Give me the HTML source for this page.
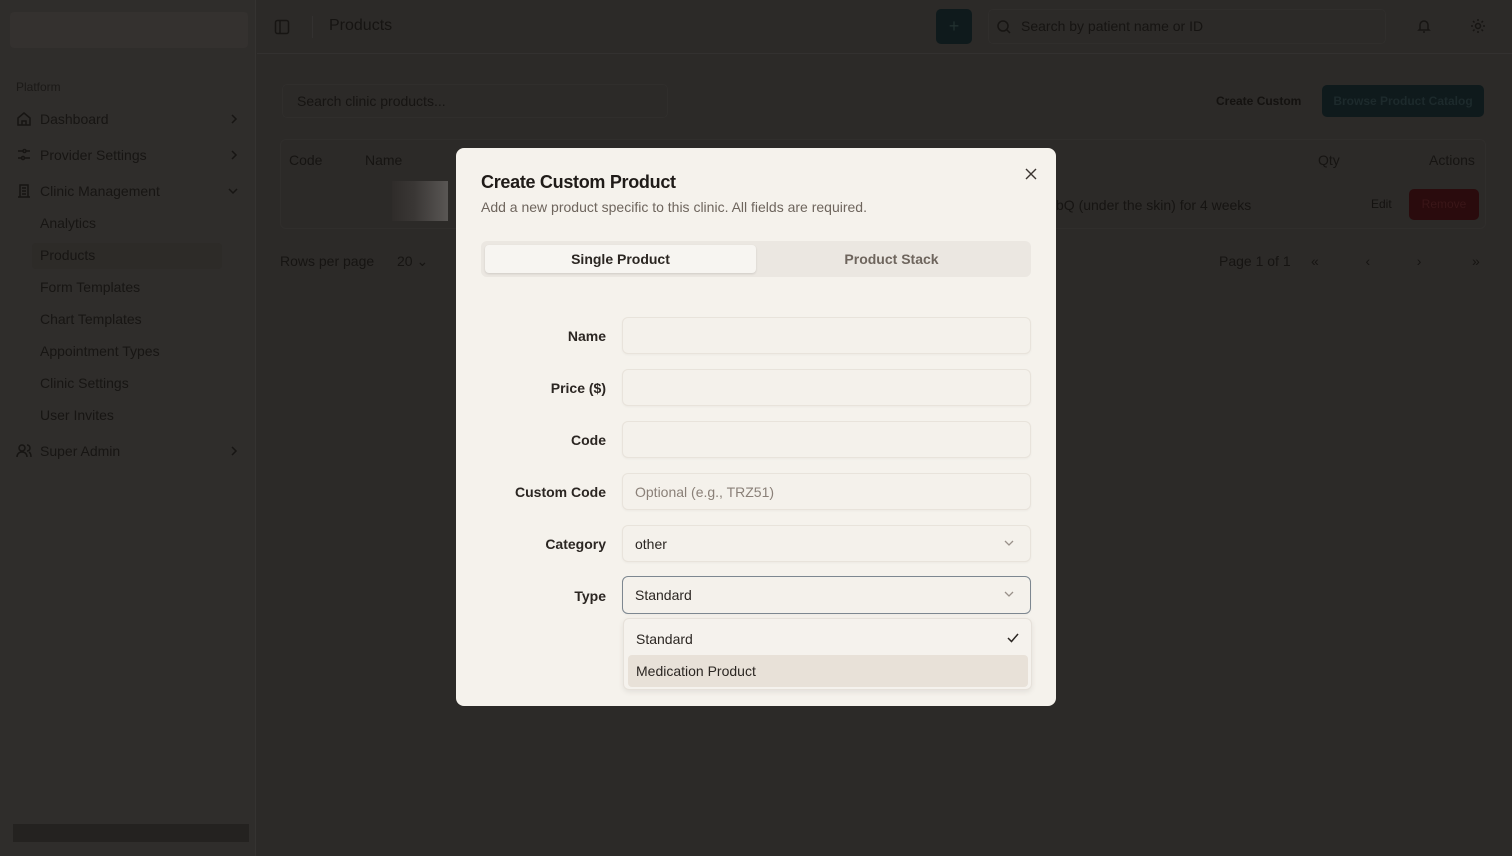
<!DOCTYPE html>
<html><head><style>
*{box-sizing:border-box;margin:0;padding:0}
body{width:1512px;height:856px;overflow:hidden;background:#2c2a28;font-family:"Liberation Sans",sans-serif;position:relative;color:#151311}
.sb{position:absolute;left:0;top:0;width:256px;height:856px;background:#2f2d2b;border-right:1px solid #353331}
.logo{position:absolute;left:10px;top:12px;width:238px;height:36px;background:#34312f;border-radius:4px}
.plat{position:absolute;left:16px;top:80px;font-size:12px;color:#1b1917}
.nav{position:absolute;left:16px;font-size:14px;color:#171513;display:flex;align-items:center;width:222px;height:18px}
.nav span{margin-left:8px}
.nav .ch{margin-left:auto}
.sub{position:absolute;left:40px;font-size:14px;color:#171513}
.topbar{position:absolute;left:257px;top:0;right:0;height:54px;border-bottom:1px solid #333130}
.t{position:absolute;font-size:14px;color:#161412}
.dark{color:#141210}
.modal{position:absolute;left:456px;top:148px;width:600px;height:558px;background:#f5f2ec;border-radius:8px}
.lbl{position:absolute;right:450px;font-size:14px;font-weight:bold;color:#2b2622;text-align:right}
.inp{position:absolute;left:166px;width:409px;height:37px;border:1px solid #e8e3db;border-radius:6px;background:#f4f1eb;font-size:14px;color:#2b2622;padding:10px 12px;box-shadow:0 1px 2px rgba(0,0,0,.04)}
.chev{position:absolute;right:16px;top:14px}
svg.i{stroke:#171513;fill:none;stroke-width:1.5}
</style></head><body>
<div class="sb">
<div class="logo"></div>
<div class="plat">Platform</div>
<div class="nav" style="top:110px"><svg class="i" width="16" height="16" viewBox="0 0 16 16"><path d="M2 7l6-5 6 5v7H2zM6 14v-4h4v4"/></svg><span>Dashboard</span><svg class="i ch" width="8" height="10" viewBox="0 0 8 10"><path d="M2 1l4 4-4 4"/></svg></div>
<div class="nav" style="top:146px"><svg class="i" width="16" height="16" viewBox="0 0 16 16"><path d="M2 4h5M10 4h4M2 11h3M9 11h5"/><circle cx="8.5" cy="4" r="1.5"/><circle cx="7" cy="11" r="1.5"/></svg><span>Provider Settings</span><svg class="i ch" width="8" height="10" viewBox="0 0 8 10"><path d="M2 1l4 4-4 4"/></svg></div>
<div class="nav" style="top:182px"><svg class="i" width="16" height="16" viewBox="0 0 16 16"><path d="M4 14V2h8v12M2 14h12M6 5h4M6 8h4M6 11h4"/></svg><span>Clinic Management</span><svg class="i ch" width="10" height="8" viewBox="0 0 10 8"><path d="M1 2l4 4 4-4"/></svg></div>
<div class="sub" style="top:215px">Analytics</div>
<div style="position:absolute;left:32px;top:243px;width:190px;height:26px;background:#2d2b28;border-radius:4px"></div>
<div class="sub" style="top:247px">Products</div>
<div class="sub" style="top:279px">Form Templates</div>
<div class="sub" style="top:311px">Chart Templates</div>
<div class="sub" style="top:343px">Appointment Types</div>
<div class="sub" style="top:375px">Clinic Settings</div>
<div class="sub" style="top:407px">User Invites</div>
<div class="nav" style="top:442px"><svg class="i" width="16" height="16" viewBox="0 0 16 16"><circle cx="6" cy="5" r="3"/><path d="M1 14c0-3 2-5 5-5s5 2 5 5M11 2a3 3 0 010 6M13 9c1.5 1 2 3 2 5"/></svg><span>Super Admin</span><svg class="i ch" width="8" height="10" viewBox="0 0 8 10"><path d="M2 1l4 4-4 4"/></svg></div>
<div style="position:absolute;left:13px;top:824px;width:236px;height:18px;background:#242220"></div>
</div>
<div class="topbar"></div>
<svg class="i" style="position:absolute;left:274px;top:19px" width="16" height="16" viewBox="0 0 16 16"><rect x="1.5" y="1.5" width="13" height="13" rx="2"/><path d="M6 2v12"/></svg>
<div style="position:absolute;left:312px;top:16px;width:1px;height:22px;background:#333130"></div>
<div class="t" style="left:329px;top:17px;font-size:16px">Products</div>
<div style="position:absolute;left:936px;top:9px;width:36px;height:35px;background:#0f1a1c;border-radius:5px;color:#22302f;text-align:center;line-height:34px;font-size:18px">+</div>
<div style="position:absolute;left:988px;top:9px;width:398px;height:35px;border:1px solid #302e2c;border-radius:5px"></div>
<svg class="i" style="position:absolute;left:996px;top:19px" width="16" height="16" viewBox="0 0 16 16"><circle cx="7" cy="7" r="5"/><path d="M11 11l3 3"/></svg>
<div class="t" style="left:1021px;top:18px">Search by patient name or ID</div>
<svg class="i" style="position:absolute;left:1416px;top:18px" width="16" height="16" viewBox="0 0 16 16"><path d="M4 11V7a4 4 0 018 0v4l1 1H3zM7 14h2"/></svg>
<svg class="i" style="position:absolute;left:1470px;top:18px" width="16" height="16" viewBox="0 0 16 16"><circle cx="8" cy="8" r="2.5"/><path d="M8 1v2M8 13v2M1 8h2M13 8h2M3 3l1.5 1.5M11.5 11.5L13 13M3 13l1.5-1.5M11.5 4.5L13 3"/></svg>
<div style="position:absolute;left:282px;top:84px;width:386px;height:34px;border:1px solid #302e2c;border-radius:5px"></div>
<div class="t" style="left:297px;top:93px">Search clinic products...</div>
<div class="t dark" style="left:1216px;top:94px;font-size:12px;font-weight:bold">Create Custom</div>
<div style="position:absolute;left:1322px;top:85px;width:162px;height:32px;background:#0f1a1c;border-radius:5px;color:#1d2a2c;font-size:12px;font-weight:bold;text-align:center;line-height:32px">Browse Product Catalog</div>
<div style="position:absolute;left:280px;top:139px;width:1206px;height:90px;border:1px solid #302e2c;border-radius:6px"></div>
<div class="t" style="left:289px;top:152px">Code</div>
<div class="t" style="left:365px;top:152px">Name</div>
<div class="t" style="left:1318px;top:152px">Qty</div>
<div class="t" style="left:1429px;top:152px">Actions</div>
<div style="position:absolute;left:392px;top:181px;width:56px;height:40px;background:linear-gradient(90deg,#2f2c2a,#3a3735 40%,#4a4745 70%,#595654)"></div>
<div class="t" style="left:1056px;top:197px">bQ (under the skin) for 4 weeks</div>
<div class="t dark" style="left:1371px;top:197px;font-size:12px">Edit</div>
<div style="position:absolute;left:1409px;top:189px;width:70px;height:31px;background:#2a0b0d;border-radius:5px;color:#3a1618;font-size:12px;text-align:center;line-height:31px">Remove</div>
<div class="t" style="left:280px;top:253px">Rows per page</div>
<div class="t" style="left:397px;top:253px">20 ⌄</div>
<div class="t" style="left:1219px;top:253px">Page 1 of 1</div>
<div class="t" style="left:1311px;top:253px">«&nbsp;&nbsp;&nbsp;&nbsp;&nbsp;&nbsp;&nbsp;&nbsp;&nbsp;&nbsp;&nbsp;&nbsp;‹&nbsp;&nbsp;&nbsp;&nbsp;&nbsp;&nbsp;&nbsp;&nbsp;&nbsp;&nbsp;&nbsp;&nbsp;›&nbsp;&nbsp;&nbsp;&nbsp;&nbsp;&nbsp;&nbsp;&nbsp;&nbsp;&nbsp;&nbsp;&nbsp;&nbsp;»</div>

<div class="modal">
<div style="position:absolute;left:25px;top:24px;font-size:18px;font-weight:bold;color:#1f1b18;letter-spacing:-.3px">Create Custom Product</div>
<div style="position:absolute;left:25px;top:51px;font-size:14px;color:#6e655d">Add a new product specific to this clinic. All fields are required.</div>
<svg style="position:absolute;left:569px;top:20px" width="12" height="12" viewBox="0 0 12 12"><path d="M1 1L11 11M11 1L1 11" stroke="#3a3430" stroke-width="1.4"/></svg>
<div style="position:absolute;left:25px;top:93px;width:550px;height:36px;background:#ebe7e1;border-radius:6px"></div>
<div style="position:absolute;left:29px;top:97px;width:271px;height:28px;background:#f7f5f1;border-radius:4px;box-shadow:0 1px 2px rgba(0,0,0,.12);text-align:center;line-height:28px;font-size:14px;font-weight:bold;color:#2b2622">Single Product</div>
<div style="position:absolute;left:300px;top:97px;width:271px;height:28px;text-align:center;line-height:28px;font-size:14px;font-weight:bold;color:#6e655d">Product Stack</div>
<div class="lbl" style="top:180px">Name</div><div class="inp" style="top:169px"></div>
<div class="lbl" style="top:232px">Price ($)</div><div class="inp" style="top:221px"></div>
<div class="lbl" style="top:284px">Code</div><div class="inp" style="top:273px"></div>
<div class="lbl" style="top:336px">Custom Code</div><div class="inp" style="top:325px;color:#8a8078">Optional (e.g., TRZ51)</div>
<div class="lbl" style="top:388px">Category</div><div class="inp" style="top:377px">other<svg class="chev" width="10" height="6" viewBox="0 0 10 6"><path d="M1 1l4 4 4-4" stroke="#9a918a" fill="none" stroke-width="1.3"/></svg></div>
<div class="lbl" style="top:440px">Type</div><div class="inp" style="top:428px;height:38px;border:1.5px solid #7d8790">Standard<svg class="chev" width="10" height="6" viewBox="0 0 10 6"><path d="M1 1l4 4 4-4" stroke="#9a918a" fill="none" stroke-width="1.3"/></svg></div>
<div style="position:absolute;left:167px;top:470px;width:409px;height:72px;background:#f5f2ed;border:1px solid #e6e1da;border-radius:6px;box-shadow:0 2px 6px rgba(0,0,0,.08)">
<div style="position:absolute;left:12px;top:12px;font-size:14px;color:#2b2622">Standard</div>
<svg style="position:absolute;right:12px;top:14px" width="12" height="10" viewBox="0 0 12 10"><path d="M1 5l3.5 3.5L11 1" stroke="#2b2622" fill="none" stroke-width="1.5"/></svg>
<div style="position:absolute;left:4px;top:36px;width:400px;height:32px;background:#e8e1d8;border-radius:4px;padding:8px;font-size:14px;color:#2b2622">Medication Product</div>
</div>
</div>
</body></html>
